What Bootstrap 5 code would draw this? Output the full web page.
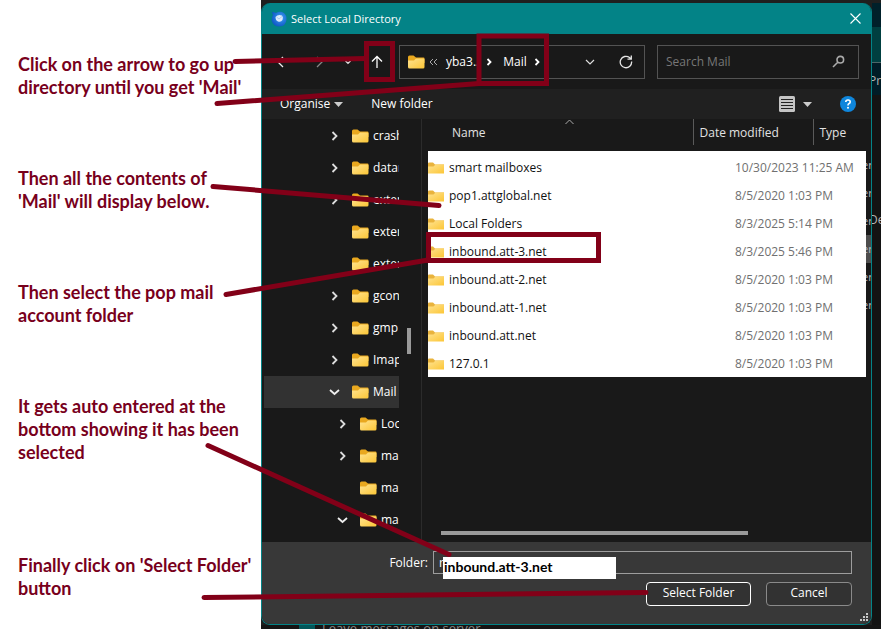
<!DOCTYPE html>
<html lang="en">
<head>
<meta charset="utf-8">
<meta name="viewport" content="width=device-width, initial-scale=1">
<title>Select Local Directory</title>
<link href="https://cdn.jsdelivr.net/npm/bootstrap@5.3.0/dist/css/bootstrap.min.css" rel="stylesheet">
<style>
  :root { --teal: #038387; --pane: #191919; }
  body { background: #fff; font-family: "Open Sans", "Noto Sans", sans-serif; font-size: 11px; line-height: 16px; color: #fff; }
  button, input { font: inherit; color: inherit; }
  svg { display: block; flex: none; }
  .page { min-height: 100vh; }
  .notes { width: 261px; padding: 53px 8px 0 18px; font-family: Lato, sans-serif; font-size: 18px; line-height: 23px; font-weight: 700; color: #78001c; }
  .notes p { margin: 0 0 68px; }
  .notes p:nth-child(4) { margin-bottom: 90px; }
  .desk { background: #1f1f1f; margin-right: 11px; padding-top: 3px; min-width: 0; }
  .dialog { background: var(--pane); border: 1px solid var(--teal); border-top: 0; border-radius: 9px; overflow: hidden; min-width: 0; }
  .titlebar { background: var(--teal); height: 31px; padding: 0 10px 0 9px; font-size: 11px; }
  .plain { background: none; border: 0; padding: 0; display: flex; align-items: center; justify-content: center; }
  .navrow { height: 55px; padding: 0 12px 0 9px; }
  .navrow .plain { width: 20px; height: 32px; flex: none; }
  .navrow .recent { margin: 0 9px 0 11px; }
  .crumbs, .search { height: 34px; border: 1px solid #535353; min-width: 0; margin-left: 12px; }
  .crumbs { flex: 1 1 246px; padding: 0 8px; font-size: 12px; }
  .search { flex: 1 1 202px; padding: 0 13px 0 8px; }
  .search input { background: none; border: 0; outline: 0; width: 100%; min-width: 0; padding: 0; font-size: 12px; }
  .search input::placeholder { color: #777; opacity: 1; }
  .toolbar { background: #202020; height: 30px; padding: 0 15px 0 18px; font-size: 12px; }
  .tree { width: 160px; padding: 1px 22px 0 2px; border-right: 1px solid #2b2b2b; font-size: 12px; flex: none; position: relative; }
  .tree ul { height: 418px; overflow: hidden; }
  .tree li { height: 32px; padding-left: 65px; white-space: nowrap; overflow: hidden; }
  .tree li.deep { padding-left: 73px; }
  .tree li.on { background: #323232; }
  .tree .chev { width: 12px; margin-right: 11px; }
  .tree .fold { margin-right: 4px; }
  .vbar { position: absolute; right: 10px; top: 209px; width: 4px; height: 26px; background: #9a9a9a; }
  .files { padding-left: 6px; min-width: 0; }
  .files table { width: 100%; table-layout: fixed; }
  .files th { height: 26px; font-weight: 400; font-size: 12px; color: #e2e2e2; padding: 2px 0 0 6px; border-right: 1px solid #5a5a5a; }
  .files th:first-child { padding-left: 24px; position: relative; }
  .files th:nth-child(n+3) { border: 0; }
  .files th svg { position: absolute; top: 0; left: 137px; }
  .files tbody::before { content: ""; display: block; height: 6px; }
  .files td { height: 28px; padding: 6px 0 0; background: #fff; color: #111; font-size: 12px; white-space: nowrap; overflow: hidden; }
  .files tbody tr:last-child td { height: 30px; padding-top: 4px; }
  .files td.when { color: #707070; padding-left: 42px; }
  .files td.kind { background: var(--pane); color: #bbb; font-size: 11px; padding: 0; text-indent: -4px; }
  .files tr.sel td.kind { background: #4d4d4d; }
  .files .fold { margin-right: 5px; }
  .hbar { height: 4px; background: #9a9a9a; margin: 0 123px 7px 13px; }
  .foot { background: #383838; height: 82px; padding: 9px 19px 0 0; position: relative; font-size: 12px; }
  .foot label { width: 171px; padding-right: 5px; text-align: right; flex: none; }
  .foot .name { height: 23px; background: none; border: 1px solid #9d9d9d; width: 100%; min-width: 0; padding: 0 5px; outline: 0; }
  .foot .typed { position: absolute; left: 181px; top: 15px; width: 173px; height: 22px; background: #fff; color: #000; font: 700 14px/20px Lato, sans-serif; padding-left: 1px; }
  .foot .push { height: 24px; border: 1px solid #8a8a8a; border-radius: 4px; background: #323232; padding: 0 0 2px; width: 86px; }
  .foot .push.main { width: 105px; border-color: #fff; margin-right: 15px; }
  .grip { position: absolute; right: 3px; bottom: 2px; }
  .edge { width: 9px; background: #131313; overflow: hidden; color: #b5b5b5; font-size: 12px; flex: none; text-indent: -3px; }
  .edge .a { height: 24px; background: #00202a; }
  .edge .b { height: 36px; background: #003f40; border-bottom: 1px solid #4c6668; }
  .edge .c { height: 32px; background: #001c26; line-height: 36px; }
  .edge .d { margin-top: 115px; line-height: 20px; }
  .under { height: 4px; background: #151515; overflow: hidden; color: #8a8a8a; font-size: 13px; line-height: 6px; padding-left: 38px; }
  .under i { width: 16px; height: 4px; background: #02575a; margin-right: 7px; }
  .marks { position: absolute; left: 0; top: 0; pointer-events: none; }
</style>
<script src="https://cdn.jsdelivr.net/npm/bootstrap@5.3.0/dist/js/bootstrap.bundle.min.js"></script>
</head>
<body>
<svg width="0" height="0" class="position-absolute" aria-hidden="true">
  <defs>
    <linearGradient id="fg" x1="0" y1="0" x2="1" y2="1"><stop offset="0" stop-color="#ffe391"/><stop offset="1" stop-color="#fcc636"/></linearGradient>
    <radialGradient id="tb" cx=".6" cy=".4" r=".7"><stop offset="0" stop-color="#3aa0f5"/><stop offset="1" stop-color="#0b4fc0"/></radialGradient>
  </defs>
  <symbol id="folder" viewBox="0 0 17 14"><path d="M0 2Q0 .5 1.500 .5H5.500L8 2.500H15.500Q16.500 2.500 16.500 3.500V8H0Z" fill="#e9a81f"/><path d="M0 5.500H6L8 3.500H15.500Q16.500 3.500 16.500 4.500V12Q16.500 13.500 15 13.500H1.500Q0 13.500 0 12Z" fill="url(#fg)"/></symbol>
  <symbol id="flat" viewBox="0 0 16 12"><path d="M0 1.500Q0 .5 1 .5H5L7 2.500H16V7H0Z" fill="#e9b33c"/><path d="M0 4.500H5.500L7.500 2.500H16V11.500H0Z" fill="url(#fg)"/></symbol>
  <symbol id="right" viewBox="0 0 12 12"><path d="M3.500 2L7.500 6L3.500 10" fill="none" stroke="#ddd" stroke-width="1.800"/></symbol>
  <symbol id="right-sm" viewBox="0 0 12 12"><path d="M4.500 3L7.500 6L4.500 9" fill="none" stroke="#fff" stroke-width="1.800"/></symbol>
  <symbol id="down" viewBox="0 0 12 12"><path d="M1 4L5.500 8L10 4" fill="none" stroke="#eee" stroke-width="1.800"/></symbol>
  <symbol id="tri" viewBox="0 0 9 5"><path d="M0 0H9L4.500 5Z" fill="#ccc"/></symbol>
</svg>

<div class="page d-flex position-relative">
  <section class="notes flex-shrink-0">
    <p>Click on the arrow to go up<br>directory until you get 'Mail'</p>
    <p>Then all the contents of<br>'Mail' will display below.</p>
    <p>Then select the pop mail<br>account folder</p>
    <p>It gets auto entered at the<br>bottom showing it has been<br>selected</p>
    <p class="mb-0">Finally click on 'Select Folder'<br>button</p>
  </section>

  <main class="desk flex-fill d-flex flex-column">
    <div class="d-flex flex-fill">
      <div class="dialog flex-fill d-flex flex-column">
        <header class="titlebar d-flex align-items-center">
          <svg width="16" height="16" viewBox="0 0 16 16"><path d="M2 4Q1 2 1 1Q3 1 5 2Q8 0 11 1Q16 3 15.500 8.500Q15 15 8.500 15.500Q2 15.500 .7 9.500Q.5 6 2 4Z" fill="url(#tb)"/><path d="M4.500 6Q7 3 11 4.500Q12.500 6 11.500 9Q10 11.500 7 10.500Q4.500 9.500 4.500 6Z" fill="#dcebfb"/><path d="M5.500 6L8 8L11 5.500" fill="none" stroke="#a9cbf0" stroke-width="1"/></svg>
          <span class="ms-1">Select Local Directory</span>
          <button class="plain ms-auto" aria-label="Close"><svg width="11" height="11" viewBox="0 0 11 11"><path d="M.5 .5L10.500 10.500M10.500 .5L.5 10.500" stroke="#fff" stroke-width="1.100"/></svg></button>
        </header>

        <nav class="navrow d-flex align-items-center">
          <button class="plain" aria-label="Back"><svg width="12" height="12" viewBox="0 0 12 12"><path d="M8 1L3 6L8 11" fill="none" stroke="#eee" stroke-width="1.300"/></svg></button>
          <button class="plain ms-3" aria-label="Forward"><svg width="12" height="12" viewBox="0 0 12 12"><path d="M6 1L11 6L6 11" fill="none" stroke="#888" stroke-width="1.300"/></svg></button>
          <button class="plain recent" aria-label="Recent"><svg width="8" height="8" viewBox="0 0 12 12"><path d="M2 4L6 8L10 4" fill="none" stroke="#ddd" stroke-width="2"/></svg></button>
          <button class="plain" aria-label="Up"><svg width="14" height="14" viewBox="0 0 14 14"><path d="M7 13V1.500M2 6.500L7 1.500L12 6.500" fill="none" stroke="#fff" stroke-width="1.300"/></svg></button>
          <div class="crumbs d-flex align-items-center">
            <svg width="17" height="14"><use href="#folder"/></svg>
            <svg class="ms-1" width="9" height="8" viewBox="0 0 9 8"><path d="M4 1L1 4L4 7M8 1L5 4L8 7" fill="none" stroke="#aaa"/></svg>
            <span class="ms-2">yba3..</span>
            <svg class="ms-1" width="12" height="12"><use href="#right-sm"/></svg>
            <span class="ms-2">Mail</span>
            <svg class="ms-1" width="12" height="12"><use href="#right-sm"/></svg>
            <button class="plain ms-auto" aria-label="Previous locations"><svg width="10" height="6" viewBox="0 0 10 6"><path d="M1 1L5 5L9 1" fill="none" stroke="#ddd" stroke-width="1.200"/></svg></button>
            <button class="plain ms-3" aria-label="Refresh"><svg width="14" height="14" viewBox="0 0 14 14"><path d="M12.600 6.500A5.700 5.700 0 1 1 10.500 2.600L12 4M12.300 .5V4.200H8.500" fill="none" stroke="#e6e6e6" stroke-width="1.300"/></svg></button>
          </div>
          <div class="search d-flex align-items-center">
            <input type="text" placeholder="Search Mail" aria-label="Search Mail">
            <svg width="13" height="13" viewBox="0 0 13 13"><circle cx="8.300" cy="4.700" r="3.300" fill="none" stroke="#aaa" stroke-width="1.600"/><path d="M5.800 7.200L1 12" stroke="#aaa" stroke-width="1.600"/></svg>
          </div>
        </nav>

        <div class="toolbar d-flex align-items-center">
          <button class="plain">Organise <svg class="ms-1" width="9" height="5"><use href="#tri"/></svg></button>
          <button class="plain ms-4 ps-1">New folder</button>
          <button class="plain ms-auto" aria-label="Change view"><svg width="16" height="16" viewBox="0 0 16 16"><rect width="16" height="16" rx="1.500" fill="#c4c4c4"/><path d="M2 3.500H14M2 6.500H14M2 9.500H14M2 12.500H14" stroke="#222" stroke-width="1.200"/></svg></button>
          <button class="plain ms-2" aria-label="More views"><svg width="9" height="5"><use href="#tri"/></svg></button>
          <button class="plain ms-4 ps-1" aria-label="Help"><svg width="16" height="16" viewBox="0 0 16 16"><circle cx="8" cy="8" r="8" fill="#0f86dc"/><path d="M5.800 6Q5.800 4 8 4Q10.200 4 10.200 6Q10.200 7.200 8.800 7.800Q8 8.200 8 9.500" fill="none" stroke="#fff" stroke-width="1.600"/><circle cx="8" cy="11.700" r="1" fill="#fff"/></svg></button>
        </div>

        <div class="d-flex flex-fill">
          <div class="tree">
            <ul class="list-unstyled mb-0">
              <li class="d-flex align-items-center"><svg class="chev" height="12"><use href="#right"/></svg><svg class="fold" width="17" height="14"><use href="#folder"/></svg>crash</li>
              <li class="d-flex align-items-center"><svg class="chev" height="12"><use href="#right"/></svg><svg class="fold" width="17" height="14"><use href="#folder"/></svg>datar</li>
              <li class="d-flex align-items-center"><svg class="chev" height="12"><use href="#right"/></svg><svg class="fold" width="17" height="14"><use href="#folder"/></svg>exten</li>
              <li class="d-flex align-items-center"><svg class="chev" height="12"></svg><svg class="fold" width="17" height="14"><use href="#folder"/></svg>exten</li>
              <li class="d-flex align-items-center"><svg class="chev" height="12"></svg><svg class="fold" width="17" height="14"><use href="#folder"/></svg>exten</li>
              <li class="d-flex align-items-center"><svg class="chev" height="12"><use href="#right"/></svg><svg class="fold" width="17" height="14"><use href="#folder"/></svg>gcon</li>
              <li class="d-flex align-items-center"><svg class="chev" height="12"><use href="#right"/></svg><svg class="fold" width="17" height="14"><use href="#folder"/></svg>gmp</li>
              <li class="d-flex align-items-center"><svg class="chev" height="12"><use href="#right"/></svg><svg class="fold" width="17" height="14"><use href="#folder"/></svg>Imap</li>
              <li class="on d-flex align-items-center"><svg class="chev" height="12"><use href="#down"/></svg><svg class="fold" width="17" height="14"><use href="#folder"/></svg>Mail</li>
              <li class="deep d-flex align-items-center"><svg class="chev" height="12"><use href="#right"/></svg><svg class="fold" width="17" height="14"><use href="#folder"/></svg>Loc</li>
              <li class="deep d-flex align-items-center"><svg class="chev" height="12"><use href="#right"/></svg><svg class="fold" width="17" height="14"><use href="#folder"/></svg>ma</li>
              <li class="deep d-flex align-items-center"><svg class="chev" height="12"></svg><svg class="fold" width="17" height="14"><use href="#folder"/></svg>ma</li>
              <li class="deep d-flex align-items-center"><svg class="chev" height="12"><use href="#down"/></svg><svg class="fold" width="17" height="14"><use href="#folder"/></svg>ma</li>
            </ul>
            <div class="vbar"></div>
          </div>
          <div class="files flex-fill d-flex flex-column">
            <table>
              <colgroup><col><col style="width:120px"><col style="width:53px"><col style="width:5px"></colgroup>
              <thead><tr><th>Name<svg width="9" height="6" viewBox="0 0 9 6"><path d="M.5 5L4.500 1L8.500 5" fill="none" stroke="#aaa"/></svg></th><th>Date modified</th><th>Type</th><th class="p-0"></th></tr></thead>
              <tbody>
                <tr><td><div class="d-flex align-items-center"><svg class="fold" width="16" height="12"><use href="#flat"/></svg>smart mailboxes</div></td><td class="when" colspan="2">10/30/2023 11:25 AM</td><td class="kind">er</td></tr>
                <tr><td><div class="d-flex align-items-center"><svg class="fold" width="16" height="12"><use href="#flat"/></svg>pop1.attglobal.net</div></td><td class="when" colspan="2">8/5/2020 1:03 PM</td><td class="kind">er</td></tr>
                <tr><td><div class="d-flex align-items-center"><svg class="fold" width="16" height="12"><use href="#flat"/></svg>Local Folders</div></td><td class="when" colspan="2">8/3/2025 5:14 PM</td><td class="kind">er</td></tr>
                <tr class="sel"><td><div class="d-flex align-items-center"><svg class="fold" width="16" height="12"><use href="#flat"/></svg>inbound.att-3.net</div></td><td class="when" colspan="2">8/3/2025 5:46 PM</td><td class="kind">er</td></tr>
                <tr><td><div class="d-flex align-items-center"><svg class="fold" width="16" height="12"><use href="#flat"/></svg>inbound.att-2.net</div></td><td class="when" colspan="2">8/5/2020 1:03 PM</td><td class="kind">er</td></tr>
                <tr><td><div class="d-flex align-items-center"><svg class="fold" width="16" height="12"><use href="#flat"/></svg>inbound.att-1.net</div></td><td class="when" colspan="2">8/5/2020 1:03 PM</td><td class="kind">er</td></tr>
                <tr><td><div class="d-flex align-items-center"><svg class="fold" width="16" height="12"><use href="#flat"/></svg>inbound.att.net</div></td><td class="when" colspan="2">8/5/2020 1:03 PM</td><td class="kind"></td></tr>
                <tr><td><div class="d-flex align-items-center"><svg class="fold" width="16" height="12"><use href="#flat"/></svg>127.0.1</div></td><td class="when" colspan="2">8/5/2020 1:03 PM</td><td class="kind"></td></tr>
              </tbody>
            </table>
            <div class="hbar mt-auto"></div>
          </div>
        </div>

        <footer class="foot">
          <div class="d-flex align-items-center">
            <label for="folderName">Folder:</label>
            <input id="folderName" class="name" type="text" value="r">
          </div>
          <div class="typed">inbound.att-3.net</div>
          <div class="d-flex justify-content-end mt-1 pt-1">
            <button class="push main">Select Folder</button>
            <button class="push">Cancel</button>
          </div>
          <svg class="grip" width="9" height="9" viewBox="0 0 9 9"><path d="M7 0h2v2h-2zM4 3h2v2h-2zM7 3h2v2h-2zM1 6h2v2h-2zM4 6h2v2h-2zM7 6h2v2h-2z" fill="#c8c8c8"/></svg>
        </footer>
      </div>
      <div class="edge"><div class="a"></div><div class="b"></div><div class="c">Pr</div><div class="d">De</div></div>
    </div>
    <div class="under d-flex"><i></i>Leave messages on server</div>
  </main>

  <svg class="marks" width="892" height="629" viewBox="0 0 892 629" fill="none" stroke="#820018" stroke-width="5" stroke-linecap="round" aria-hidden="true">
    <path d="M235 61.500L366 58.500M217 103.500L479 83.500M213 186.500L439 205.500M226 294.500L428 260M208 445.500L449 554.500M204 597.500L646 592.500"/>
    <g stroke-linecap="butt"><rect x="366.500" y="43.500" width="26" height="36"/><rect x="479" y="36" width="67.500" height="47.500"/><rect x="428.500" y="234.500" width="170" height="26"/></g>
  </svg>
</div>
</body>
</html>
